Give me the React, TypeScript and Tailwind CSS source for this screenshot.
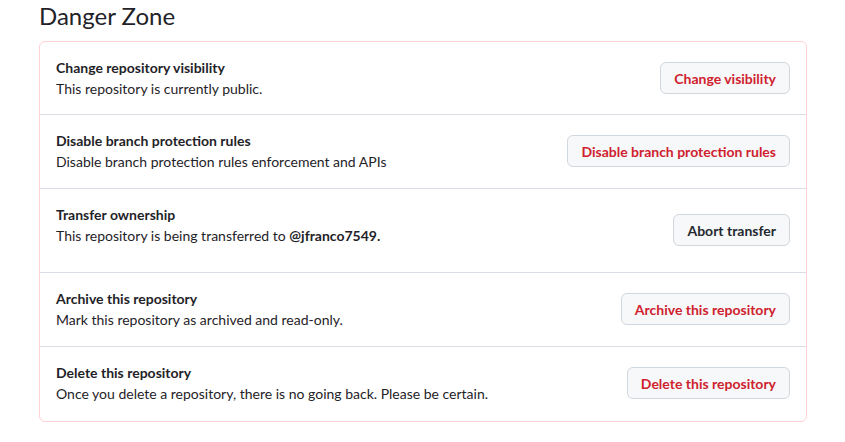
const rows = [
  {
    title: 'Change repository visibility',
    desc: <>This repository is currently public.</>,
    button: 'Change visibility',
    danger: true,
  },
  {
    title: 'Disable branch protection rules',
    desc: <>Disable branch protection rules enforcement and APIs</>,
    button: 'Disable branch protection rules',
    danger: true,
  },
  {
    title: 'Transfer ownership',
    desc: (
      <>
        This repository is being transferred to <strong className="font-bold">@jfranco7549.</strong>
      </>
    ),
    button: 'Abort transfer',
    danger: false,
  },
  {
    title: 'Archive this repository',
    desc: <>Mark this repository as archived and read-only.</>,
    button: 'Archive this repository',
    danger: true,
  },
  {
    title: 'Delete this repository',
    desc: <>Once you delete a repository, there is no going back. Please be certain.</>,
    button: 'Delete this repository',
    danger: true,
  },
];

// per-row padding, matched to the screenshot
const rowPad = [
  'pt-[15px] pb-[15px]',
  'pt-[15px] pb-4 border-t border-[#d8dee4]',
  'pt-[15px] pb-[26px] border-t border-[#d8dee4]',
  'pt-[15px] pb-4 border-t border-[#d8dee4]',
  'pt-[15px] pb-[17px] border-t border-[#d8dee4]',
];

export default function App() {
  return (
    <div
      className="min-h-screen bg-white text-[#1f2328] pl-[39px] pr-[38px]"
      style={{ fontFamily: 'Lato, "Liberation Sans", sans-serif' }}
    >
      <h2 className="text-[24px] leading-[32px] font-normal mb-[9px]">Danger Zone</h2>

      <div className="border border-[#ffd1d4] rounded-md">
        {rows.map((row, i) => (
          <div key={row.title} className={`flex items-start justify-between px-4 ${rowPad[i]}`}>
            <div className="text-[14px] leading-[21px]">
              <div className="font-bold">{row.title}</div>
              <div>{row.desc}</div>
            </div>
            <button
              type="button"
              className={`h-8 px-[13px] rounded-md border border-[#d0d7de] bg-[#f6f8fa] text-[14px] font-bold whitespace-nowrap ${
                row.danger ? 'text-[#cf222e]' : 'text-[#24292f]'
              } ${i === 2 ? 'mt-[10px]' : 'mt-[5px]'}`}
            >
              {row.button}
            </button>
          </div>
        ))}
      </div>
    </div>
  );
}
